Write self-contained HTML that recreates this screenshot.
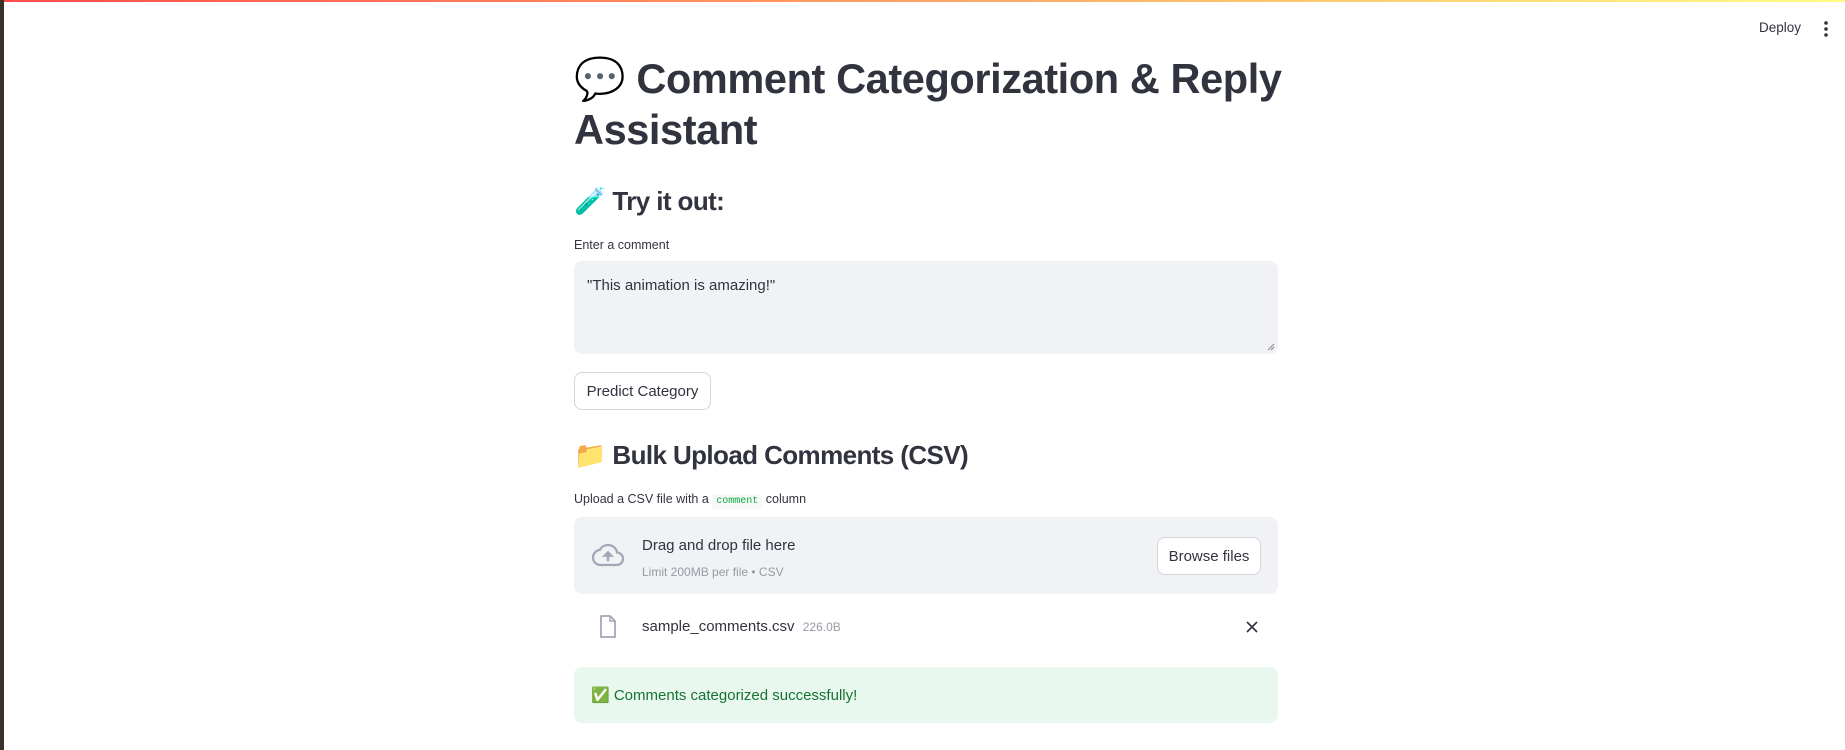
<!DOCTYPE html>
<html><head><meta charset="utf-8"><style>
*{box-sizing:border-box;margin:0;padding:0}
html,body{width:1845px;height:750px;overflow:hidden;background:#fff;font-family:"Liberation Sans","Noto Sans CJK JP",sans-serif;color:#31333f}
.bar{position:absolute;left:0;top:0;width:1845px;height:2px;background:linear-gradient(90deg,#ff4b4b,#fffd80)}
.side{position:absolute;left:0;top:0;width:4px;height:750px;background:#3a312b}
.abs{position:absolute}
h1{position:absolute;left:574px;top:53px;font-size:41.5px;line-height:51px;font-weight:700;letter-spacing:-0.4px;white-space:nowrap}
h3{position:absolute;left:574px;font-size:26px;font-weight:700;letter-spacing:-0.6px;white-space:nowrap}
.lbl{position:absolute;left:574px;font-size:12.5px}
.ta{position:absolute;left:574px;top:261px;width:704px;height:93px;background:#f0f2f6;border-radius:8px}
.btn{position:absolute;background:#fff;border:1px solid #d6d6d9;border-radius:8px;font-size:15px;display:flex;align-items:center;justify-content:center}
code{font-family:"Liberation Mono",monospace;font-size:10px;color:#09ab3b;background:#f8f8fa;padding:2px 4px;border-radius:3px}
</style></head><body>
<div class="bar"></div><div class="side"></div>
<div class="abs" style="left:1759px;top:20px;font-size:13.5px">Deploy</div>
<svg class="abs" style="left:1822px;top:20px" width="8" height="18"><circle cx="4" cy="3" r="1.8" fill="#31333f"/><circle cx="4" cy="9" r="1.8" fill="#31333f"/><circle cx="4" cy="15" r="1.8" fill="#31333f"/></svg>
<h1>💬 Comment Categorization &amp; Reply<br>Assistant</h1>
<h3 style="top:186px">🧪 Try it out:</h3>
<div class="lbl" style="top:238px">Enter a comment</div>
<div class="ta"><div class="abs" style="left:13px;top:16px;font-size:15px">"This animation is amazing!"</div>
<svg class="abs" style="right:3px;bottom:3px" width="8" height="8"><path d="M1 7L7 1M4 7L7 4" stroke="#888" stroke-width="1"/></svg></div>
<div class="btn" style="left:574px;top:372px;width:137px;height:38px">Predict Category</div>
<h3 style="top:440px">📁 Bulk Upload Comments (CSV)</h3>
<div class="lbl" style="top:492px">Upload a CSV file with a <code>comment</code> column</div>
<div class="abs" style="left:574px;top:517px;width:704px;height:77px;background:#f0f2f6;border-radius:8px"></div>
<svg class="abs" style="left:589px;top:540px" width="38" height="30" viewBox="0 0 24 24"><path d="M19.35 10.04A7.49 7.49 0 0 0 12 4C9.11 4 6.6 5.64 5.35 8.04A5.994 5.994 0 0 0 0 14c0 3.31 2.69 6 6 6h13c2.76 0 5-2.24 5-5 0-2.64-2.05-4.78-4.65-4.96z" fill="none" stroke="#a3a8b8" stroke-width="1.8"/><path d="M12 17v-5M9.5 12.5L12 10l2.5 2.5z" stroke="#a3a8b8" stroke-width="2" fill="#a3a8b8"/></svg>
<div class="abs" style="left:642px;top:537px;font-size:15px">Drag and drop file here</div>
<div class="abs" style="left:642px;top:565px;font-size:12px;color:#999ba3">Limit 200MB per file • CSV</div>
<div class="btn" style="left:1157px;top:537px;width:104px;height:38px">Browse files</div>
<svg class="abs" style="left:599px;top:615px" width="18" height="24" viewBox="0 0 18 24"><path d="M2 1h9l5 5v16H2z" fill="none" stroke="#a3a8b8" stroke-width="1.8" stroke-linejoin="round"/><path d="M11 1v5h5" fill="none" stroke="#a3a8b8" stroke-width="1.5"/></svg>
<div class="abs" style="left:642px;top:618px;font-size:15px">sample_comments.csv <span style="font-size:12px;color:#999ba3;margin-left:4px">226.0B</span></div>
<svg class="abs" style="left:1246px;top:621px" width="12" height="12"><path d="M1 1L11 11M11 1L1 11" stroke="#31333f" stroke-width="1.6"/></svg>
<div class="abs" style="left:574px;top:667px;width:704px;height:56px;background:#e8f8ee;border-radius:8px"></div>
<div class="abs" style="left:591px;top:686px;font-size:15px;color:#177233">✅ Comments categorized successfully!</div>
</body></html>
